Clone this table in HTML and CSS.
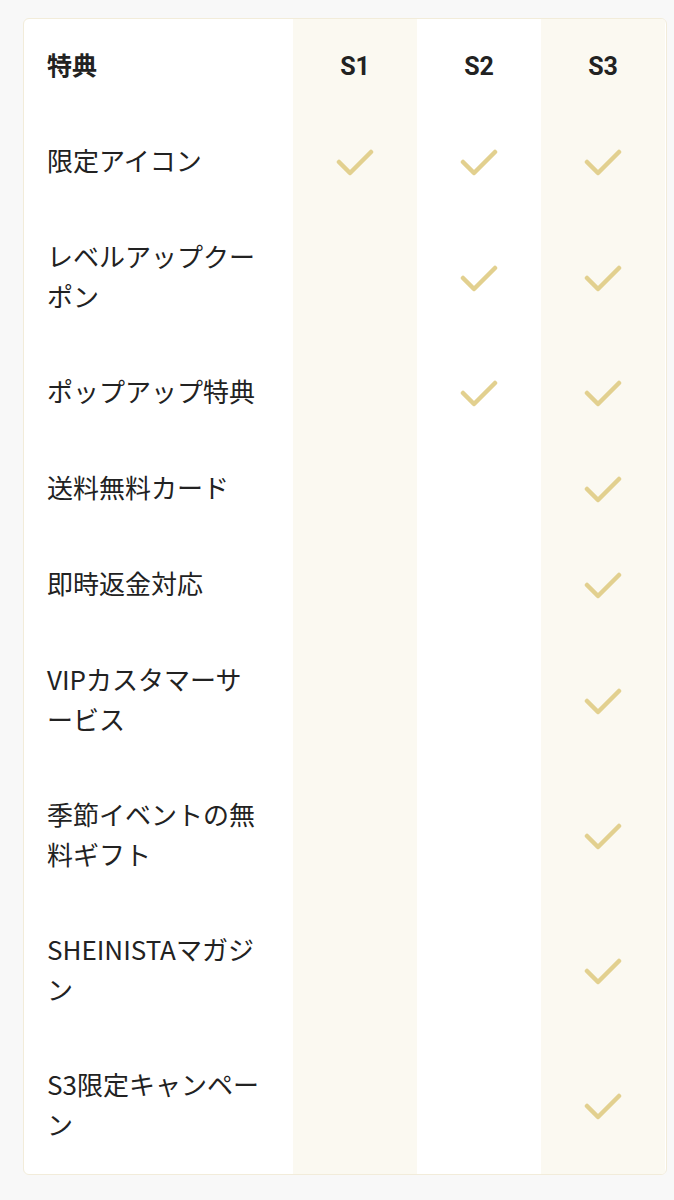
FILE: index.html
```html
<!DOCTYPE html>
<html lang="ja">
<head>
<meta charset="utf-8">
<link rel="stylesheet" href="styles.css">
</head>
<body>
<div class="card">
  <div class="grid">
    <div class="cell label head">特典</div>
    <div class="cell lvl shade head">S1</div>
    <div class="cell lvl head">S2</div>
    <div class="cell lvl shade head">S3</div>

    <div class="cell label">限定アイコン</div>
    <div class="cell lvl shade"><svg class="chk" viewBox="0 0 38 28"><polyline points="3,13 14,24 35,3"/></svg></div>
    <div class="cell lvl"><svg class="chk" viewBox="0 0 38 28"><polyline points="3,13 14,24 35,3"/></svg></div>
    <div class="cell lvl shade"><svg class="chk" viewBox="0 0 38 28"><polyline points="3,13 14,24 35,3"/></svg></div>

    <div class="cell label">レベルアップクーポン</div>
    <div class="cell lvl shade"></div>
    <div class="cell lvl"><svg class="chk" viewBox="0 0 38 28"><polyline points="3,13 14,24 35,3"/></svg></div>
    <div class="cell lvl shade"><svg class="chk" viewBox="0 0 38 28"><polyline points="3,13 14,24 35,3"/></svg></div>

    <div class="cell label">ポップアップ特典</div>
    <div class="cell lvl shade"></div>
    <div class="cell lvl"><svg class="chk" viewBox="0 0 38 28"><polyline points="3,13 14,24 35,3"/></svg></div>
    <div class="cell lvl shade"><svg class="chk" viewBox="0 0 38 28"><polyline points="3,13 14,24 35,3"/></svg></div>

    <div class="cell label">送料無料カード</div>
    <div class="cell lvl shade"></div>
    <div class="cell lvl"></div>
    <div class="cell lvl shade"><svg class="chk" viewBox="0 0 38 28"><polyline points="3,13 14,24 35,3"/></svg></div>

    <div class="cell label">即時返金対応</div>
    <div class="cell lvl shade"></div>
    <div class="cell lvl"></div>
    <div class="cell lvl shade"><svg class="chk" viewBox="0 0 38 28"><polyline points="3,13 14,24 35,3"/></svg></div>

    <div class="cell label">VIPカスタマーサービス</div>
    <div class="cell lvl shade"></div>
    <div class="cell lvl"></div>
    <div class="cell lvl shade"><svg class="chk" viewBox="0 0 38 28"><polyline points="3,13 14,24 35,3"/></svg></div>

    <div class="cell label">季節イベントの無料ギフト</div>
    <div class="cell lvl shade"></div>
    <div class="cell lvl"></div>
    <div class="cell lvl shade"><svg class="chk" viewBox="0 0 38 28"><polyline points="3,13 14,24 35,3"/></svg></div>

    <div class="cell label">SHEINISTAマガジン</div>
    <div class="cell lvl shade"></div>
    <div class="cell lvl"></div>
    <div class="cell lvl shade"><svg class="chk" viewBox="0 0 38 28"><polyline points="3,13 14,24 35,3"/></svg></div>

    <div class="cell label">S3限定キャンペーン</div>
    <div class="cell lvl shade"></div>
    <div class="cell lvl"></div>
    <div class="cell lvl shade"><svg class="chk" viewBox="0 0 38 28"><polyline points="3,13 14,24 35,3"/></svg></div>
  </div>
</div>
</body>
</html>
```
FILE: styles.css
```css
* { box-sizing: border-box; }
html, body {
  margin: 0;
  background: #f8f8f8;
}
body {
  padding: 18px 8px 0 23px;
  font-family: "Noto Sans CJK JP", sans-serif;
  color: #222;
}
.card {
  width: 644px;
  background: #fff;
  border: 1.5px solid #f2ecda;
  border-radius: 6px;
  overflow: hidden;
}
.grid {
  display: grid;
  grid-template-columns: 269px 124px 124px 124px;
}
.cell {
  min-height: 96px;
  padding: 27.5px 0;
  display: flex;
  align-items: center;
  font-size: 26px;
  line-height: 40px;
}
.label {
  padding: 24.5px 27px 30.5px 23px;
}
.lvl {
  justify-content: center;
  font-family: Roboto, "Noto Sans CJK JP", sans-serif;
}
.shade {
  background: #fbf9f1;
}
.head {
  font-weight: 700;
  font-size: 25px;
}
.chk {
  width: 38px;
  height: 28px;
  fill: none;
  stroke: #e2d08f;
  stroke-width: 4.5;
  stroke-linecap: round;
  stroke-linejoin: round;
}
```
